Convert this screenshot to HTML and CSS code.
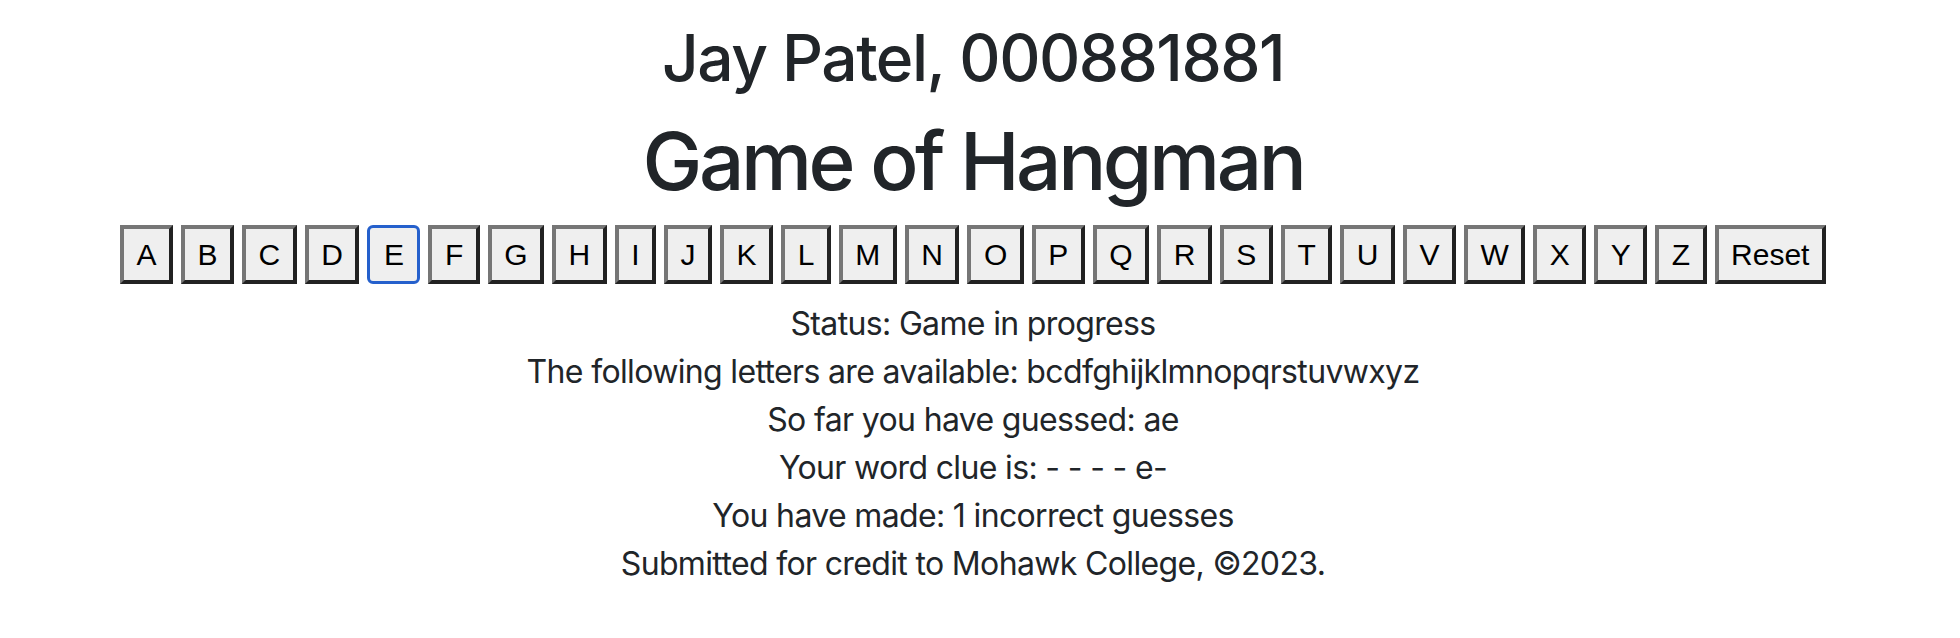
FILE: index.html
```html
<!DOCTYPE html>
<html lang="en">
<head>
<meta charset="utf-8">
<title>Game of Hangman</title>
<link rel="stylesheet" href="styles.css">
</head>
<body>
<main class="page">
  <h2 class="student">Jay Patel, 000881881</h2>
  <h1 class="title">Game of Hangman</h1>
  <div class="letters">
    <button class="key">A</button>
    <button class="key">B</button>
    <button class="key">C</button>
    <button class="key">D</button>
    <button class="key key-focus">E</button>
    <button class="key">F</button>
    <button class="key">G</button>
    <button class="key">H</button>
    <button class="key">I</button>
    <button class="key">J</button>
    <button class="key">K</button>
    <button class="key">L</button>
    <button class="key">M</button>
    <button class="key">N</button>
    <button class="key">O</button>
    <button class="key">P</button>
    <button class="key">Q</button>
    <button class="key">R</button>
    <button class="key">S</button>
    <button class="key">T</button>
    <button class="key">U</button>
    <button class="key">V</button>
    <button class="key">W</button>
    <button class="key">X</button>
    <button class="key">Y</button>
    <button class="key">Z</button>
    <button class="key">Reset</button>
  </div>
  <div class="info">
    <p class="line">Status: Game in progress</p>
    <p class="line">The following letters are available: bcdfghijklmnopqrstuvwxyz</p>
    <p class="line">So far you have guessed: ae</p>
    <p class="line">Your word clue is: - - - - e-</p>
    <p class="line">You have made: 1 incorrect guesses</p>
    <p class="line">Submitted for credit to Mohawk College, ©2023.</p>
  </div>
</main>
</body>
</html>
```
FILE: styles.css
```css
html, body {
  margin: 0;
  background: #ffffff;
}
body {
  font-family: Inter, "Noto Sans", sans-serif;
  font-size: 32px;
  line-height: 1.5;
  color: #212529;
  padding: 20px 14px 0 0;
}
.page {
  text-align: center;
}
.student {
  margin: 0 0 16px;
  font-size: 64px;
  font-weight: 500;
  line-height: 1.2;
  letter-spacing: -1.5px;
}
.title {
  margin: 0 0 16px;
  font-size: 80px;
  font-weight: 500;
  line-height: 1.2;
  letter-spacing: -3.4px;
}
.letters {
  display: flex;
  justify-content: center;
  gap: 8px;
}
.key {
  font-family: "Liberation Sans", Arial, sans-serif;
  font-size: 30px;
  line-height: normal;
  color: #000000;
  background: #efefef;
  border: 4px solid;
  border-color: #767676 #222222 #222222 #767676;
  border-radius: 0;
  padding: 9px 12.5px 8px;
  margin: 0;
}
.key-focus {
  border: 3px solid #2560cc;
  border-radius: 6px;
  padding: 10px 13.5px 9px;
}
.info {
  margin-top: 16px;
  letter-spacing: -0.65px;
}
.line {
  margin: 0;
}
```
